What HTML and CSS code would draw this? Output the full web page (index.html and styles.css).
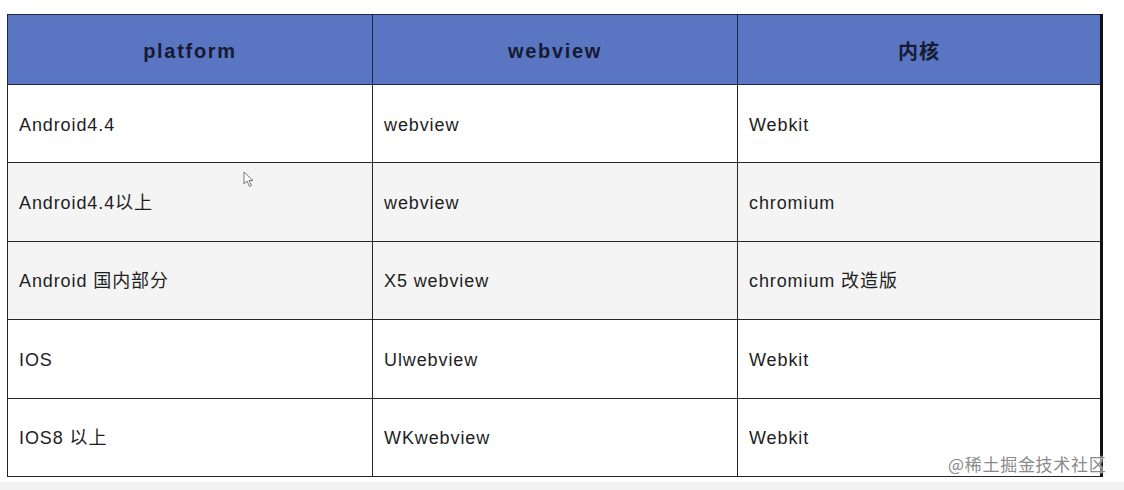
FILE: index.html
```html
<!DOCTYPE html>
<html lang="zh">
<head>
<meta charset="utf-8">
<link rel="stylesheet" href="styles.css">
</head>
<body>
<div class="page">
  <table class="grid">
    <colgroup><col class="c1"><col class="c2"><col class="c3"></colgroup>
    <thead>
      <tr><th>platform</th><th>webview</th><th class="cjk">内核</th></tr>
    </thead>
    <tbody>
      <tr class="first"><td>Android4.4</td><td>webview</td><td>Webkit</td></tr>
      <tr class="shade"><td>Android4.4以上</td><td>webview</td><td>chromium</td></tr>
      <tr class="shade"><td>Android 国内部分</td><td>X5 webview</td><td>chromium 改造版</td></tr>
      <tr><td>IOS</td><td>Ulwebview</td><td>Webkit</td></tr>
      <tr><td>IOS8 以上</td><td>WKwebview</td><td>Webkit</td></tr>
    </tbody>
  </table>
  <svg class="cursor" width="12" height="18" viewBox="0 0 12 18"><path d="M1 1 L1 13 L4 10 L6.5 15.5 L8.5 14.5 L6 9.5 L10 9.5 Z" fill="#fff" stroke="#777" stroke-width="1"/></svg>
  <div class="watermark">@稀土掘金技术社区</div>
  <div class="footer-band"></div>
</div>
</body>
</html>
```
FILE: styles.css
```css
html, body {
  margin: 0;
  padding: 0;
  background: #ffffff;
}
.page {
  position: relative;
  width: 1124px;
  height: 490px;
  overflow: hidden;
  padding-top: 14px;
  padding-left: 7px;
  box-sizing: border-box;
}
.grid {
  border-collapse: collapse;
  table-layout: fixed;
  width: 1096px;
  font-family: "Liberation Sans", Arial, "Noto Sans CJK SC", sans-serif;
  border-right: 3px solid #111;
}
.c1 { width: 365px; }
.c2 { width: 365px; }
.c3 { width: 364px; }
.grid th, .grid td {
  border: 1.5px solid #262626;
  padding: 2px 0 0 11px;
  vertical-align: middle;
  line-height: 22px;
}
.grid th {
  background: #5a76c3;
  color: #161a33;
  font-size: 20px;
  font-weight: bold;
  letter-spacing: 1.7px;
  text-align: center;
  height: 66px;
  padding: 3px 0 0 0;
  border-color: #1f2747;
}
.grid th.cjk {
  font-family: "Noto Sans CJK SC", sans-serif;
  font-size: 20px;
  letter-spacing: 1px;
}
.grid td {
  font-size: 18px;
  color: #1e1e1e;
  letter-spacing: 0.9px;
  height: 75.5px;
  background: #ffffff;
}
.grid tr.first td {
  height: 75px;
}
.grid tr.shade td {
  background: #f4f4f4;
}
.cursor {
  position: absolute;
  left: 243px;
  top: 171px;
}
.watermark {
  position: absolute;
  left: 948px;
  top: 451px;
  font-family: "Noto Sans CJK SC", sans-serif;
  font-size: 17px;
  color: #8a8a8a;
  letter-spacing: 0.7px;
  text-shadow: 0 0 2px #fff, 0 0 2px #fff;
}
.footer-band {
  position: absolute;
  left: 0;
  right: 0;
  top: 482px;
  height: 8px;
  background: #f2f2f2;
}
```
